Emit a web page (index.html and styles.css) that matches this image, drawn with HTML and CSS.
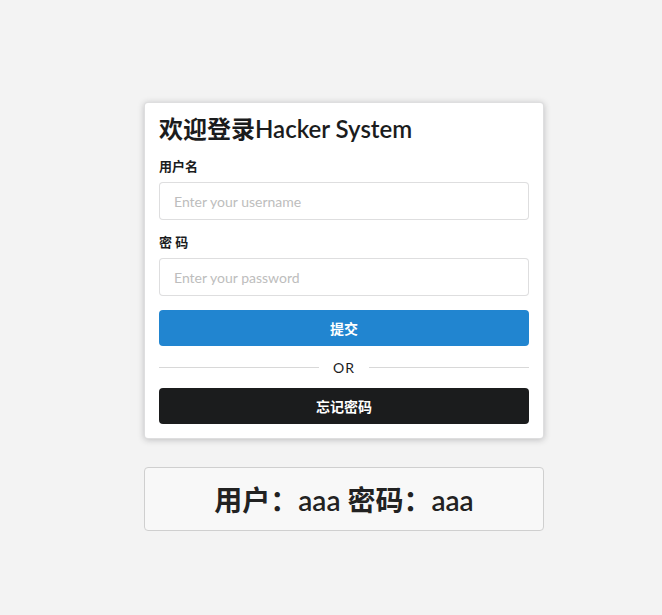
FILE: index.html
```html
<!DOCTYPE html>
<html lang="zh">
<head>
<meta charset="utf-8">
<link rel="stylesheet" href="styles.css">
</head>
<body>
<main class="page">
  <form class="card">
    <h2 class="title">欢迎登录Hacker System</h2>
    <div class="field">
      <label class="label">用户名</label>
      <input class="input" type="text" placeholder="Enter your username">
    </div>
    <div class="field">
      <label class="label">密 码</label>
      <input class="input" type="password" placeholder="Enter your password">
    </div>
    <button class="btn btn-blue" type="button">提交</button>
    <div class="divider"><span>OR</span></div>
    <button class="btn btn-black" type="button">忘记密码</button>
  </form>
  <div class="hint">用户：aaa 密码：aaa</div>
</main>
</body>
</html>
```

FILE: styles.css
```css
html, body {
  margin: 0;
  padding: 0;
  background: #f3f3f3;
  font-family: Lato, "Noto Sans CJK SC", sans-serif;
  color: #1b1c1d;
}
.page {
  display: flex;
  flex-direction: column;
  align-items: flex-start;
  padding: 102px 0 0 144px;
}
.card {
  box-sizing: border-box;
  width: 400px;
  background: #fff;
  border: 1px solid rgba(34,36,38,.15);
  border-radius: 4px;
  box-shadow: 0 1px 6px rgba(34,36,38,.25);
  padding: 11px 14px 14px;
  margin: 0;
}
.title {
  margin: 0 0 14px;
  font-size: 24px;
  font-weight: 600;
  line-height: 30px;
}
.field {
  display: flex;
  flex-direction: column;
  margin-bottom: 14px;
}
.label {
  font-size: 13px;
  font-weight: 600;
  line-height: 16px;
  margin-bottom: 8px;
}
.input {
  box-sizing: border-box;
  height: 38px;
  border: 1px solid rgba(34,36,38,.15);
  border-radius: 4px;
  padding: 0 14px;
  font-family: Lato, "Noto Sans CJK SC", sans-serif;
  font-size: 14px;
  color: #333;
  outline: none;
}
.input::placeholder { color: #bdbdbd; }
.btn {
  display: block;
  width: 100%;
  height: 36px;
  border: 0;
  border-radius: 4px;
  color: #fff;
  font-family: Lato, "Noto Sans CJK SC", sans-serif;
  font-size: 14px;
  font-weight: 700;
}
.btn-blue { background: #2185d0; }
.btn-black { background: #1b1c1d; }
.divider {
  display: flex;
  align-items: center;
  gap: 14px;
  height: 42px;
  font-size: 14px;
  letter-spacing: 1px;
  color: #1b1c1d;
}
.divider::before, .divider::after {
  content: "";
  flex: 1;
  border-top: 1px solid #d8d8d8;
}
.hint {
  box-sizing: border-box;
  width: 400px;
  height: 64px;
  margin-top: 28px;
  background: #f8f8f8;
  border: 1px solid #cfcfcf;
  border-radius: 4px;
  display: flex;
  align-items: center;
  justify-content: center;
  font-size: 28px;
  font-weight: 600;
  color: #222;
}
```
